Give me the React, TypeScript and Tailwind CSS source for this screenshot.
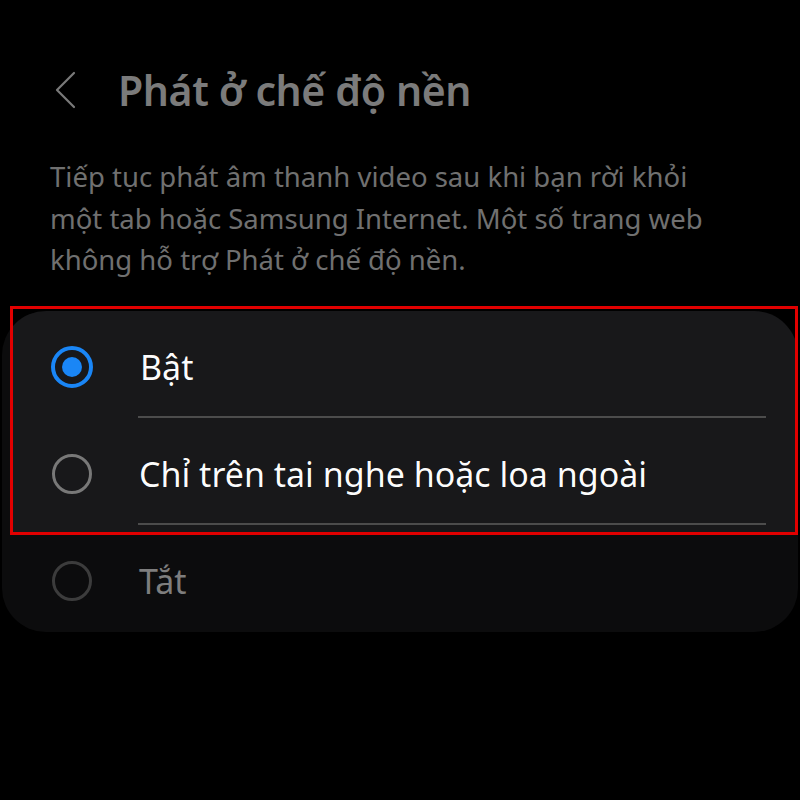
import React from "react";

const font = { fontFamily: '"Noto Sans", "Open Sans", sans-serif' };

function Radio({ selected }: { selected?: boolean }) {
  if (selected) {
    return (
      <div className="w-[42px] h-[42px] rounded-full border-[4px] border-[#0d437b] flex items-center justify-center shrink-0">
        <div className="w-[20px] h-[20px] rounded-full bg-[#0d437b]" />
      </div>
    );
  }
  return <div className="w-[40px] h-[40px] rounded-full border-[3px] border-[#3c3c3c] shrink-0 ml-[1px]" />;
}

function Row({ label, selected, divider }: { label: string; selected?: boolean; divider?: boolean }) {
  return (
    <div className="h-[107px] flex items-center pl-[49px] pt-[5px] relative">
      <Radio selected={selected} />
      <span className="ml-[47px] text-[34px] text-[#7e7e7e] leading-none">{label}</span>
      {divider && (
        <div className="absolute left-[136px] right-[32px] bottom-0 h-[2px] bg-[#262626]" />
      )}
    </div>
  );
}

export default function App() {
  return (
    <div className="w-[800px] h-[800px] bg-black relative overflow-hidden" style={font}>
      <div className="flex items-center h-[60px] mt-[60px]">
        <svg width="24" height="40" viewBox="0 0 24 40" className="ml-[53px]">
          <path d="M21 3 L4 20 L21 37" fill="none" stroke="#7a7a7a" strokeWidth="2.2" strokeLinecap="round" strokeLinejoin="round" />
        </svg>
        <h1 className="ml-[41px] text-[41px] font-semibold text-[#7b7b7b] leading-none tracking-[-0.4px]">
          Phát ở chế độ nền
        </h1>
      </div>
      <p className="mt-[36px] ml-[50px] w-[690px] text-[27.5px] leading-[41.5px] text-[#707070]">
        Tiếp tục phát âm thanh video sau khi bạn rời khỏi một tab hoặc Samsung Internet. Một số trang web không hỗ trợ Phát ở chế độ nền.
      </p>
      <div className="mt-[30px] mx-[2px] rounded-[44px] bg-[#0c0c0d] flex flex-col">
        <Row label="Bật" selected divider />
        <Row label="Chỉ trên tai nghe hoặc loa ngoài" divider />
        <Row label="Tắt" />
      </div>
      <div className="absolute left-[10px] top-[306px] w-[788px] h-[229px] border-[3px] border-[#e10000] backdrop-brightness-200" />
    </div>
  );
}
